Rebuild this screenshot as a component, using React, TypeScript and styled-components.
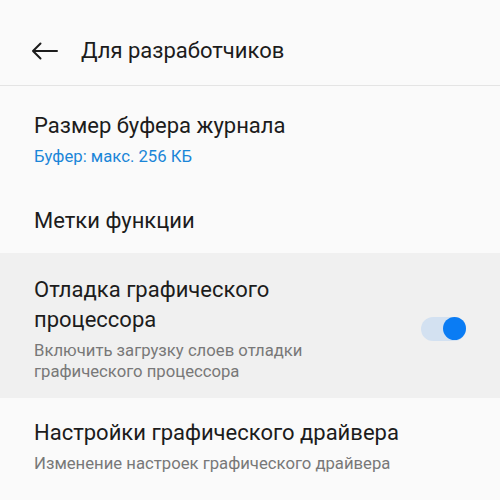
import React from 'react';
import styled, { createGlobalStyle } from 'styled-components';

const GlobalStyle = createGlobalStyle`
    html, body {
        margin: 0;
        padding: 0;
        background: #fafafa;
        font-family: Roboto, "Noto Sans", sans-serif;
    }
`;

type Item = {
    title: string;
    sub?: string;
    accent?: boolean;
    active?: boolean;
    toggle?: boolean;
    pad: string;
};

const items: Item[] = [
    { title: 'Размер буфера журнала', sub: 'Буфер: макс. 256 КБ', accent: true, pad: '25px 34px 20px 34px' },
    { title: 'Метки функции', pad: '19px 34px 17px 34px' },
    {
        title: 'Отладка графического процессора',
        sub: 'Включить загрузку слоев отладки графического процессора',
        active: true,
        toggle: true,
        pad: '22px 34px 16px 34px',
    },
    { title: 'Настройки графического драйвера', sub: 'Изменение настроек графического драйвера', pad: '20px 34px 20px 34px' },
];

const App: React.FC = () => {
    return (
        <Screen>
            <GlobalStyle />
            <Header>
                <BackButton aria-label="back">
                    <svg width="27" height="18" viewBox="0 0 27 18">
                        <path d="M26 9H2M9.5 1.5L2 9l7.5 7.5" fill="none" stroke="#1c1c1c" strokeWidth="2" strokeLinecap="round" strokeLinejoin="round" />
                    </svg>
                </BackButton>
                <Title>Для разработчиков</Title>
            </Header>
            <List>
                {items.map((item) => (
                    <Row key={item.title} $active={item.active} $pad={item.pad}>
                        <RowText>
                            <RowTitle $narrow={item.toggle}>{item.title}</RowTitle>
                            {item.sub && <RowSub $accent={item.accent} $narrow={item.toggle}>{item.sub}</RowSub>}
                        </RowText>
                        {item.toggle && (
                            <Switch>
                                <span className="track" />
                                <span className="thumb" />
                            </Switch>
                        )}
                    </Row>
                ))}
            </List>
        </Screen>
    );
};

const Screen = styled.div`
    width: 500px;
    height: 500px;
    overflow: hidden;
    background: #fafafa;
`;

const Header = styled.div`
    height: 86px;
    display: flex;
    align-items: center;
    padding: 16px 0 0 31px;
    box-sizing: border-box;
    border-bottom: 1px solid #e4e4e4;
`;

const BackButton = styled.div`
    width: 27px;
    height: 18px;
    display: flex;
    margin: 0 23px 0 0;
    & > svg {
        display: block;
    }
`;

const Title = styled.h1`
    margin: 0;
    font-size: 22px;
    font-weight: 400;
    color: #1c1c1c;
`;

const List = styled.div`
    display: flex;
    flex-direction: column;
`;

const Row = styled.div<{ $active?: boolean; $pad: string }>`
    display: flex;
    align-items: center;
    padding: ${(p) => p.$pad};
    background: ${(p) => (p.$active ? '#f0f0f0' : 'transparent')};
`;

const RowText = styled.div`
    flex: 1;
    display: flex;
    flex-direction: column;
`;

const RowTitle = styled.div<{ $narrow?: boolean }>`
    font-size: 22px;
    line-height: 30px;
    color: #1c1c1c;
    max-width: ${(p) => (p.$narrow ? '290px' : 'none')};
`;

const RowSub = styled.div<{ $accent?: boolean; $narrow?: boolean }>`
    margin: 5px 0 0 0;
    font-size: 16.7px;
    line-height: 21px;
    color: ${(p) => (p.$accent ? '#1a86d8' : '#787878')};
    max-width: ${(p) => (p.$narrow ? '300px' : 'none')};
`;

const Switch = styled.div`
    position: relative;
    width: 45px;
    height: 24px;
    & > .track {
        position: absolute;
        left: 0;
        top: 0;
        width: 45px;
        height: 24px;
        border-radius: 12px;
        background: #d3e1f1;
    }
    & > .thumb {
        position: absolute;
        right: 0;
        top: 0.5px;
        width: 23px;
        height: 23px;
        border-radius: 50%;
        background: #0a7cf4;
    }
`;

export default App;
